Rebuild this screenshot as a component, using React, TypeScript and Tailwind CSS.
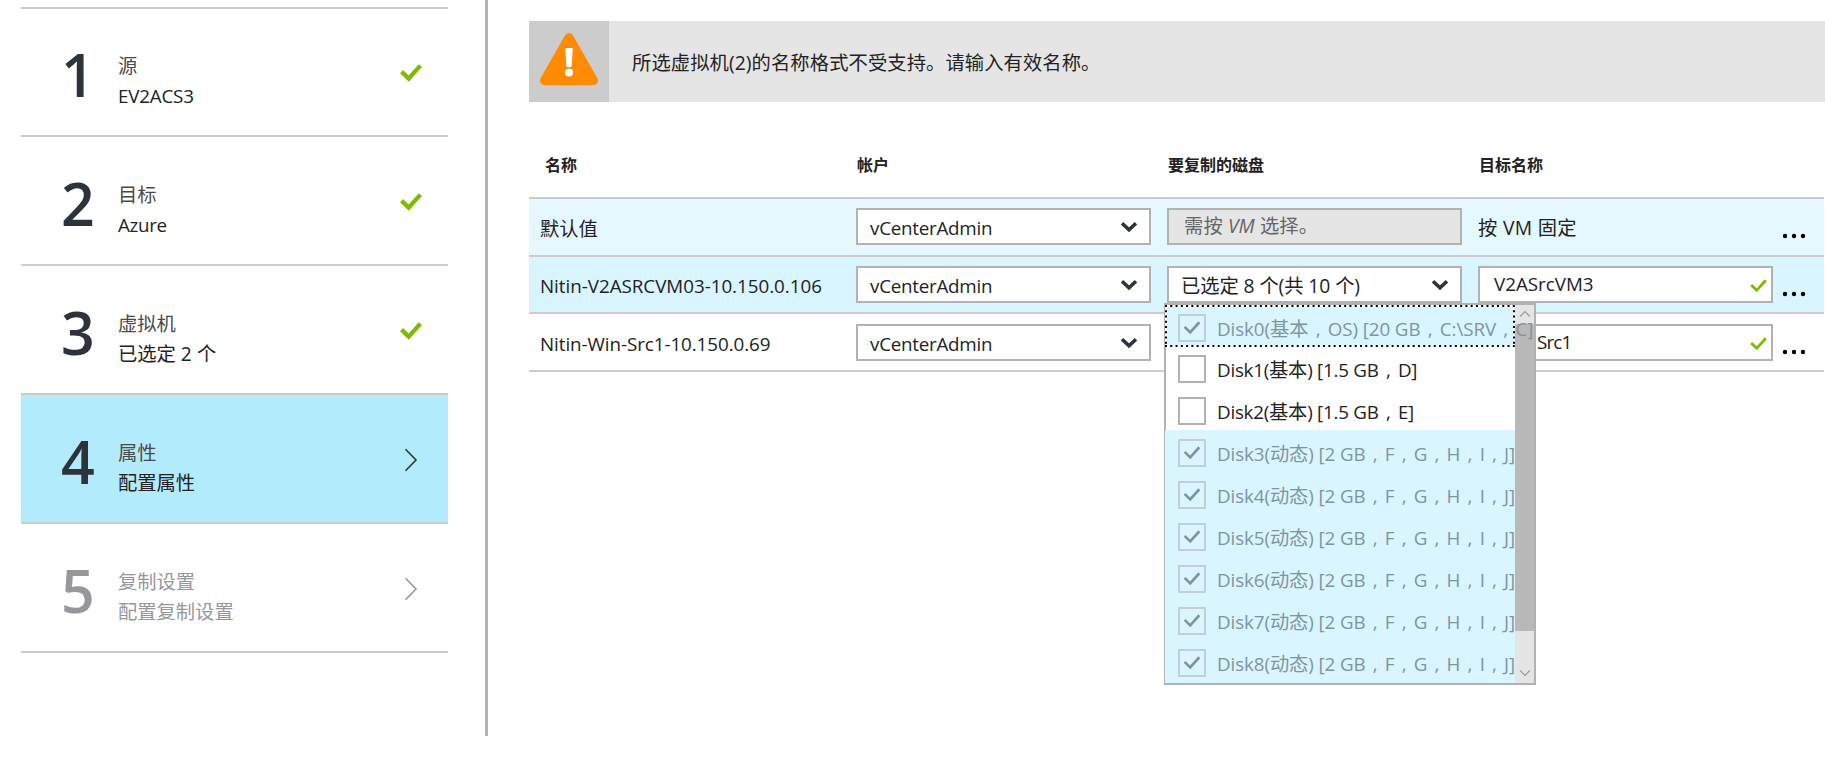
import React from "react";

function Check({ className, w = 4.4 }: { className: string; w?: number }) {
  return (
    <svg className={className} viewBox="0 0 22 18" fill="none" stroke="currentColor" strokeWidth={w}>
      <path d="M1.5 7.6 L8.7 14.6 L20.4 1.6" />
    </svg>
  );
}

function T({ children, className = "text-[18.8px]" }: { children: React.ReactNode; className?: string }) {
  return <span className={"inline-block whitespace-pre " + className}>{children}</span>;
}

const Comma = () => <span className="inline-block w-[19.3px] text-center">,</span>;
const Z = ({ children }: { children: React.ReactNode }) => <span className="text-[19.3px]">{children}</span>;

type StepProps = {
  n: number;
  title: string;
  sub: React.ReactNode;
  state: "done" | "active" | "next";
  className: string;
};

function Step({ n, title, sub, state, className }: StepProps) {
  const dim = state === "next";
  return (
    <div className={"flex border-b-2 border-[#cccccc] pl-[40px] " + className}>
      <div className={"w-[57px] text-[59px] font-semibold leading-[76px] " + (dim ? "text-[#95979b]" : "text-[#2d333b]")}>{n}</div>
      <div className={"mt-[14px] flex-1 text-[19.3px] leading-[31px] " + (dim ? "text-[#95979b]" : "text-[#222222]")}>
        <div className={dim ? "" : "text-[#4a4a4a]"}>{title}</div>
        <div className="leading-[30px]">{sub}</div>
      </div>
      {state === "done" ? (
        <Check className="mr-[26px] mt-[28px] h-[18px] w-[22px] text-[#7fba00]" />
      ) : (
        <svg
          className={"mr-[30px] mt-[25px] h-[24px] w-[14px] " + (dim ? "text-[#95979b]" : "text-[#2d333b]")}
          viewBox="0 0 14 24"
          fill="none"
          stroke="currentColor"
          strokeWidth="1.6"
        >
          <path d="M1.5 1.2 L12 12 L1.5 22.8" />
        </svg>
      )}
    </div>
  );
}

function Select({ children }: { children: React.ReactNode }) {
  return (
    <div className="flex h-[37px] w-[295px] justify-between border-2 border-[#b2b2b2] bg-white pl-[12px] pr-[11px] text-[#222222]">
      <div className="leading-[35px]">{children}</div>
      <svg className="mt-[11px] h-[12px] w-[18px] text-[#2d333b]" viewBox="0 0 18 12" fill="none" stroke="currentColor" strokeWidth="3.6">
        <path d="M2 2.2 L9 8.8 L16 2.2" />
      </svg>
    </div>
  );
}

function NameInput({ children, className }: { children: React.ReactNode; className: string }) {
  return (
    <div className={"flex h-[37px] w-[295px] justify-between border-2 border-[#b2b2b2] bg-white pr-[4px] text-[#222222] " + className}>
      <div className="leading-[31px]">{children}</div>
      <Check className="mt-[11px] h-[14px] w-[17px] text-[#7fba00]" w={3.6} />
    </div>
  );
}

function Dots() {
  return (
    <svg className="mt-[25px] h-[6px] w-[24px]" viewBox="0 0 24 6" fill="black">
      <circle cx="3" cy="3" r="2.2" />
      <circle cx="12" cy="3" r="2.2" />
      <circle cx="21" cy="3" r="2.2" />
    </svg>
  );
}

const Account = () => (
  <Select>
    <T className="text-[18.8px] tracking-[-0.25px]">vCenterAdmin</T>
  </Select>
);

type Disk = { name: string; label: React.ReactNode; locked: boolean; focus?: boolean };

const dynamicDisk = (i: number): Disk => ({
  name: "Disk" + i,
  locked: true,
  label: (
    <T className="text-[18.8px] tracking-[-0.1px]">
      Disk{i}(<Z>动态</Z>) [2 GB<Comma />F<Comma />G<Comma />H<Comma />I<Comma />J]
    </T>
  ),
});

const disks: Disk[] = [
  {
    name: "Disk0",
    locked: true,
    focus: true,
    label: (
      <T className="text-[18.8px] tracking-[-0.08px]">
        Disk0(<Z>基本</Z><Comma />OS) [20 GB<Comma />C:\SRV<Comma />C]
      </T>
    ),
  },
  { name: "Disk1", locked: false, label: <T className="text-[18.8px] tracking-[-0.24px]">Disk1(<Z>基本</Z>) [1.5 GB<Comma />D]</T> },
  { name: "Disk2", locked: false, label: <T className="text-[18.8px] tracking-[-0.24px]">Disk2(<Z>基本</Z>) [1.5 GB<Comma />E]</T> },
  dynamicDisk(3),
  dynamicDisk(4),
  dynamicDisk(5),
  dynamicDisk(6),
  dynamicDisk(7),
  dynamicDisk(8),
];

function FocusRing() {
  return (
    <svg className="absolute inset-0 h-[42px] w-[350px]" viewBox="0 0 350 42" fill="none" strokeWidth="2">
      <rect x="1" y="1" width="348" height="40" stroke="white" />
      <path d="M0 1 H350 M0 41 H350 M1 5.2 V40 M349 5.2 V40" stroke="black" strokeDasharray="2 3.27" />
    </svg>
  );
}

function DiskMenu() {
  return (
    <div className="absolute left-[-3px] top-[37px] z-10 flex h-[382px] w-[372px] border-2 border-l border-[#b2b2b2] bg-white">
      <div className="flex w-[350px] flex-col">
        {disks.map((d) => (
          <div
            key={d.name}
            className={
              "relative flex h-[42px] shrink-0 pt-[9px] " +
              (d.locked ? "bg-[#d9f5ff] pl-[13px] text-[#7f959e] " : "border-l border-[#b2b2b2] pl-[12px] text-[#222222] ") +
              (d.focus ? "z-20 mb-[-1px]" : "z-10 last:h-[43px]")
            }
          >
            {d.focus && <FocusRing />}
            <div className={"flex h-[28px] w-[28px] shrink-0 border-2 " + (d.locked ? "border-[#c3cfd3]" : "border-[#b2b2b2]")}>
              {d.locked && <Check className="ml-[3px] mt-[5px] h-[14px] w-[18px]" w={3.4} />}
            </div>
            <div className="relative ml-[11px] mt-[1px] leading-[28px]">{d.label}</div>
          </div>
        ))}
      </div>
      <div className="flex w-[19px] flex-col items-center bg-[#e5e5e5] text-[#999999]">
        <svg className="mt-[5px] h-[8px] w-[12px] shrink-0" viewBox="0 0 12 8" fill="none" stroke="currentColor" strokeWidth="1.2">
          <path d="M1 6.6 L6 1.6 L11 6.6" />
        </svg>
        <div className="mt-[6px] h-[307px] w-full bg-[#b9b9b9]" />
        <svg className="mt-[38px] h-[8px] w-[12px] shrink-0" viewBox="0 0 12 8" fill="none" stroke="currentColor" strokeWidth="1.2">
          <path d="M1 1.4 L6 6.4 L11 1.4" />
        </svg>
      </div>
    </div>
  );
}

export default function App() {
  return (
    <div className="flex h-[760px] w-[1825px] overflow-hidden bg-white font-['Open_Sans','Noto_Sans_CJK_SC',sans-serif] text-[19.3px] text-[#222222]">
      <div className="flex h-[736px] w-[488px] shrink-0 flex-col border-r-[3px] border-[#b2b2b2] pl-[21px] pr-[37px] pt-[7px]">
        <div className="h-[2px] shrink-0 bg-[#cccccc]" />
        <Step n={1} title="源" sub={<T className="text-[18.8px] tracking-[-0.2px]">EV2ACS3</T>} state="done" className="h-[128px] pt-[27px]" />
        <Step n={2} title="目标" sub={<T className="text-[18.8px] tracking-[-0.35px]">Azure</T>} state="done" className="h-[129px] pt-[28px]" />
        <Step n={3} title="虚拟机" sub="已选定 2 个" state="done" className="h-[129px] pt-[28px]" />
        <Step n={4} title="属性" sub="配置属性" state="active" className="h-[129px] bg-[#b2ebfb] pt-[28px]" />
        <Step n={5} title="复制设置" sub="配置复制设置" state="next" className="h-[129px] pt-[28px]" />
      </div>

      <div className="flex flex-1 flex-col pl-[41px] pt-[21px]">
        <div className="flex h-[81px] bg-[#e5e5e5]">
          <div className="w-[80px] bg-[#cccccc] pl-[11px] pt-[11px]">
            <svg className="h-[54px] w-[58px]" viewBox="0 0 58 54">
              <path d="M29 5.5 L53.5 48.5 H4.5 Z" fill="#ff8c00" stroke="#ff8c00" strokeWidth="9" strokeLinejoin="round" />
              <path d="M25.2 16 H32.8 L31.6 35 H26.4 Z" fill="white" />
              <circle cx="29" cy="40.5" r="4" fill="white" />
            </svg>
          </div>
          <div className="ml-[23px] leading-[84px]">
            <T className="text-[19.3px] tracking-[0.1px]">所选虚拟机(2)的名称格式不受支持。请输入有效名称。</T>
          </div>
        </div>

        <div className="w-[1295px]">
          <div className="grid h-[97px] grid-cols-[327px_311px_311px_1fr] border-b-2 border-[#cccccc] pt-[47px] text-[16px] font-bold leading-[32px]">
            <div className="pl-[16px]">名称</div>
            <div className="pl-[1px]">帐户</div>
            <div className="pl-[1px]">要复制的磁盘</div>
            <div className="pl-[1px]">目标名称</div>
          </div>
          <div className="grid h-[58px] grid-cols-[327px_311px_311px_304px_1fr] border-b-2 border-[#cccccc] bg-[#e5f7ff] pt-[9px]">
            <div className="pl-[11px] leading-[41px]">默认值</div>
            <Account />
            <div className="h-[37px] w-[295px] border-2 border-[#b2b2b2] bg-[#e5e5e5] pl-[15px] leading-[31px] text-[#666666]">
              <T className="text-[19.3px] tracking-[0.1px]">需按 <i>VM</i> 选择。</T>
            </div>
            <div className="leading-[40px]">
              <T className="text-[19.3px] tracking-[0.3px]">按 VM 固定</T>
            </div>
            <Dots />
          </div>
          <div className="grid h-[57px] grid-cols-[327px_311px_311px_304px_1fr] border-b-2 border-[#cccccc] bg-[#d9f5ff] pt-[9px]">
            <div className="pl-[11px] leading-[39px]">
              <T className="text-[18.8px] tracking-[-0.02px]">Nitin-V2ASRCVM03-10.150.0.106</T>
            </div>
            <Account />
            <div className="relative">
              <Select>
                <T className="text-[19.3px] tracking-[-0.08px]">已选定 8 个(共 10 个)</T>
              </Select>
              <DiskMenu />
            </div>
            <NameInput className="pl-[14px]">
              <T>V2ASrcVM3</T>
            </NameInput>
            <Dots />
          </div>
          <div className="grid h-[58px] grid-cols-[327px_311px_311px_304px_1fr] border-b-2 border-[#cccccc] pt-[10px]">
            <div className="pl-[11px] leading-[39px]">
              <T className="text-[18.8px] tracking-[-0.06px]">Nitin-Win-Src1-10.150.0.69</T>
            </div>
            <Account />
            <div />
            <NameInput className="pl-[57px]">
              <T className="text-[18.8px] tracking-[-0.8px]">Src1</T>
            </NameInput>
            <Dots />
          </div>
        </div>
      </div>
    </div>
  );
}
